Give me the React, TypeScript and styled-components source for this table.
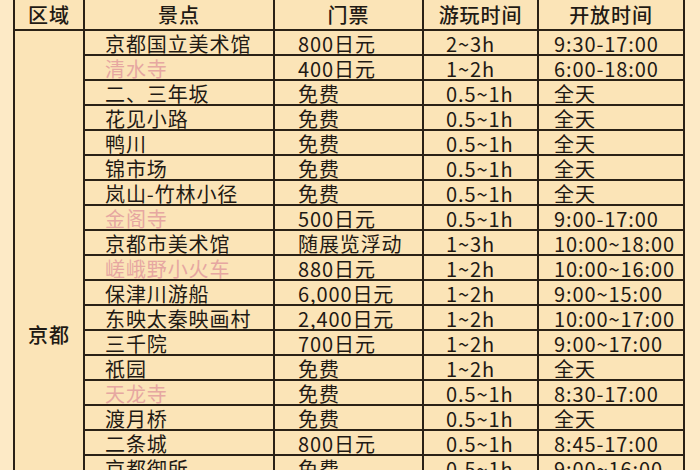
import React from "react";
import styled, { createGlobalStyle } from "styled-components";

const GlobalStyle = createGlobalStyle`
  html, body {
    margin: 0;
    padding: 0;
    background: #fdeac6;
    overflow: hidden;
  }
  body {
    font-family: "Noto Sans CJK SC", "Noto Sans", sans-serif;
    color: #1f1a14;
  }
`;

const Page = styled.div`
  width: 700px;
  height: 470px;
  overflow: hidden;
  padding-left: 13px;
  box-sizing: border-box;
`;

const Table = styled.table`
  width: 670px;
  margin-top: -2px;
  border-collapse: collapse;
  table-layout: fixed;
  background: #fbe4b7;
  font-size: 20px;
  letter-spacing: 0.9px;
`;

const Th = styled.th`
  height: 29px;
  padding: 0;
  border: 2px solid #2a2116;
  font-weight: 500;
  text-align: center;
  vertical-align: middle;
  line-height: 21px;
`;

const Td = styled.td<{ $pad: number }>`
  height: 21px;
  padding: 2px 0 0 ${(p) => p.$pad}px;
  border: 2px solid #2a2116;
  white-space: nowrap;
  line-height: 21px;
  vertical-align: middle;
`;

const RegionCell = styled.td`
  padding: 293px 0 0 0;
  border: 2px solid #2a2116;
  text-align: center;
  vertical-align: top;
  font-weight: 500;
  line-height: 21px;
`;

const Name = styled.span<{ $pink?: boolean }>`
  color: ${(p) => (p.$pink ? "#e6a7a1" : "inherit")};
`;

type Row = [string, string, string, string, boolean?];

const rows: Row[] = [
  ["京都国立美术馆", "800日元", "2~3h", "9:30-17:00"],
  ["清水寺", "400日元", "1~2h", "6:00-18:00", true],
  ["二、三年坂", "免费", "0.5~1h", "全天"],
  ["花见小路", "免费", "0.5~1h", "全天"],
  ["鸭川", "免费", "0.5~1h", "全天"],
  ["锦市场", "免费", "0.5~1h", "全天"],
  ["岚山-竹林小径", "免费", "0.5~1h", "全天"],
  ["金阁寺", "500日元", "0.5~1h", "9:00-17:00", true],
  ["京都市美术馆", "随展览浮动", "1~3h", "10:00~18:00"],
  ["嵯峨野小火车", "880日元", "1~2h", "10:00~16:00", true],
  ["保津川游船", "6,000日元", "1~2h", "9:00~15:00"],
  ["东映太秦映画村", "2,400日元", "1~2h", "10:00~17:00"],
  ["三千院", "700日元", "1~2h", "9:00~17:00"],
  ["祇园", "免费", "1~2h", "全天"],
  ["天龙寺", "免费", "0.5~1h", "8:30-17:00", true],
  ["渡月桥", "免费", "0.5~1h", "全天"],
  ["二条城", "800日元", "0.5~1h", "8:45-17:00"],
  ["京都御所", "免费", "0.5~1h", "9:00~16:00"],
];

export default function App() {
  return (
    <Page>
      <GlobalStyle />
      <Table>
        <colgroup>
          <col style={{ width: 70 }} />
          <col style={{ width: 190 }} />
          <col style={{ width: 149 }} />
          <col style={{ width: 115 }} />
          <col style={{ width: 146 }} />
        </colgroup>
        <thead>
          <tr>
            <Th>区域</Th>
            <Th>景点</Th>
            <Th>门票</Th>
            <Th>游玩时间</Th>
            <Th>开放时间</Th>
          </tr>
        </thead>
        <tbody>
          {rows.map(([name, ticket, stay, open, pink], i) => (
            <tr key={name}>
              {i === 0 && <RegionCell rowSpan={rows.length}>京都</RegionCell>}
              <Td $pad={20}>
                <Name $pink={pink}>{name}</Name>
              </Td>
              <Td $pad={23}>{ticket}</Td>
              <Td $pad={22}>{stay}</Td>
              <Td $pad={15}>{open}</Td>
            </tr>
          ))}
        </tbody>
      </Table>
    </Page>
  );
}
